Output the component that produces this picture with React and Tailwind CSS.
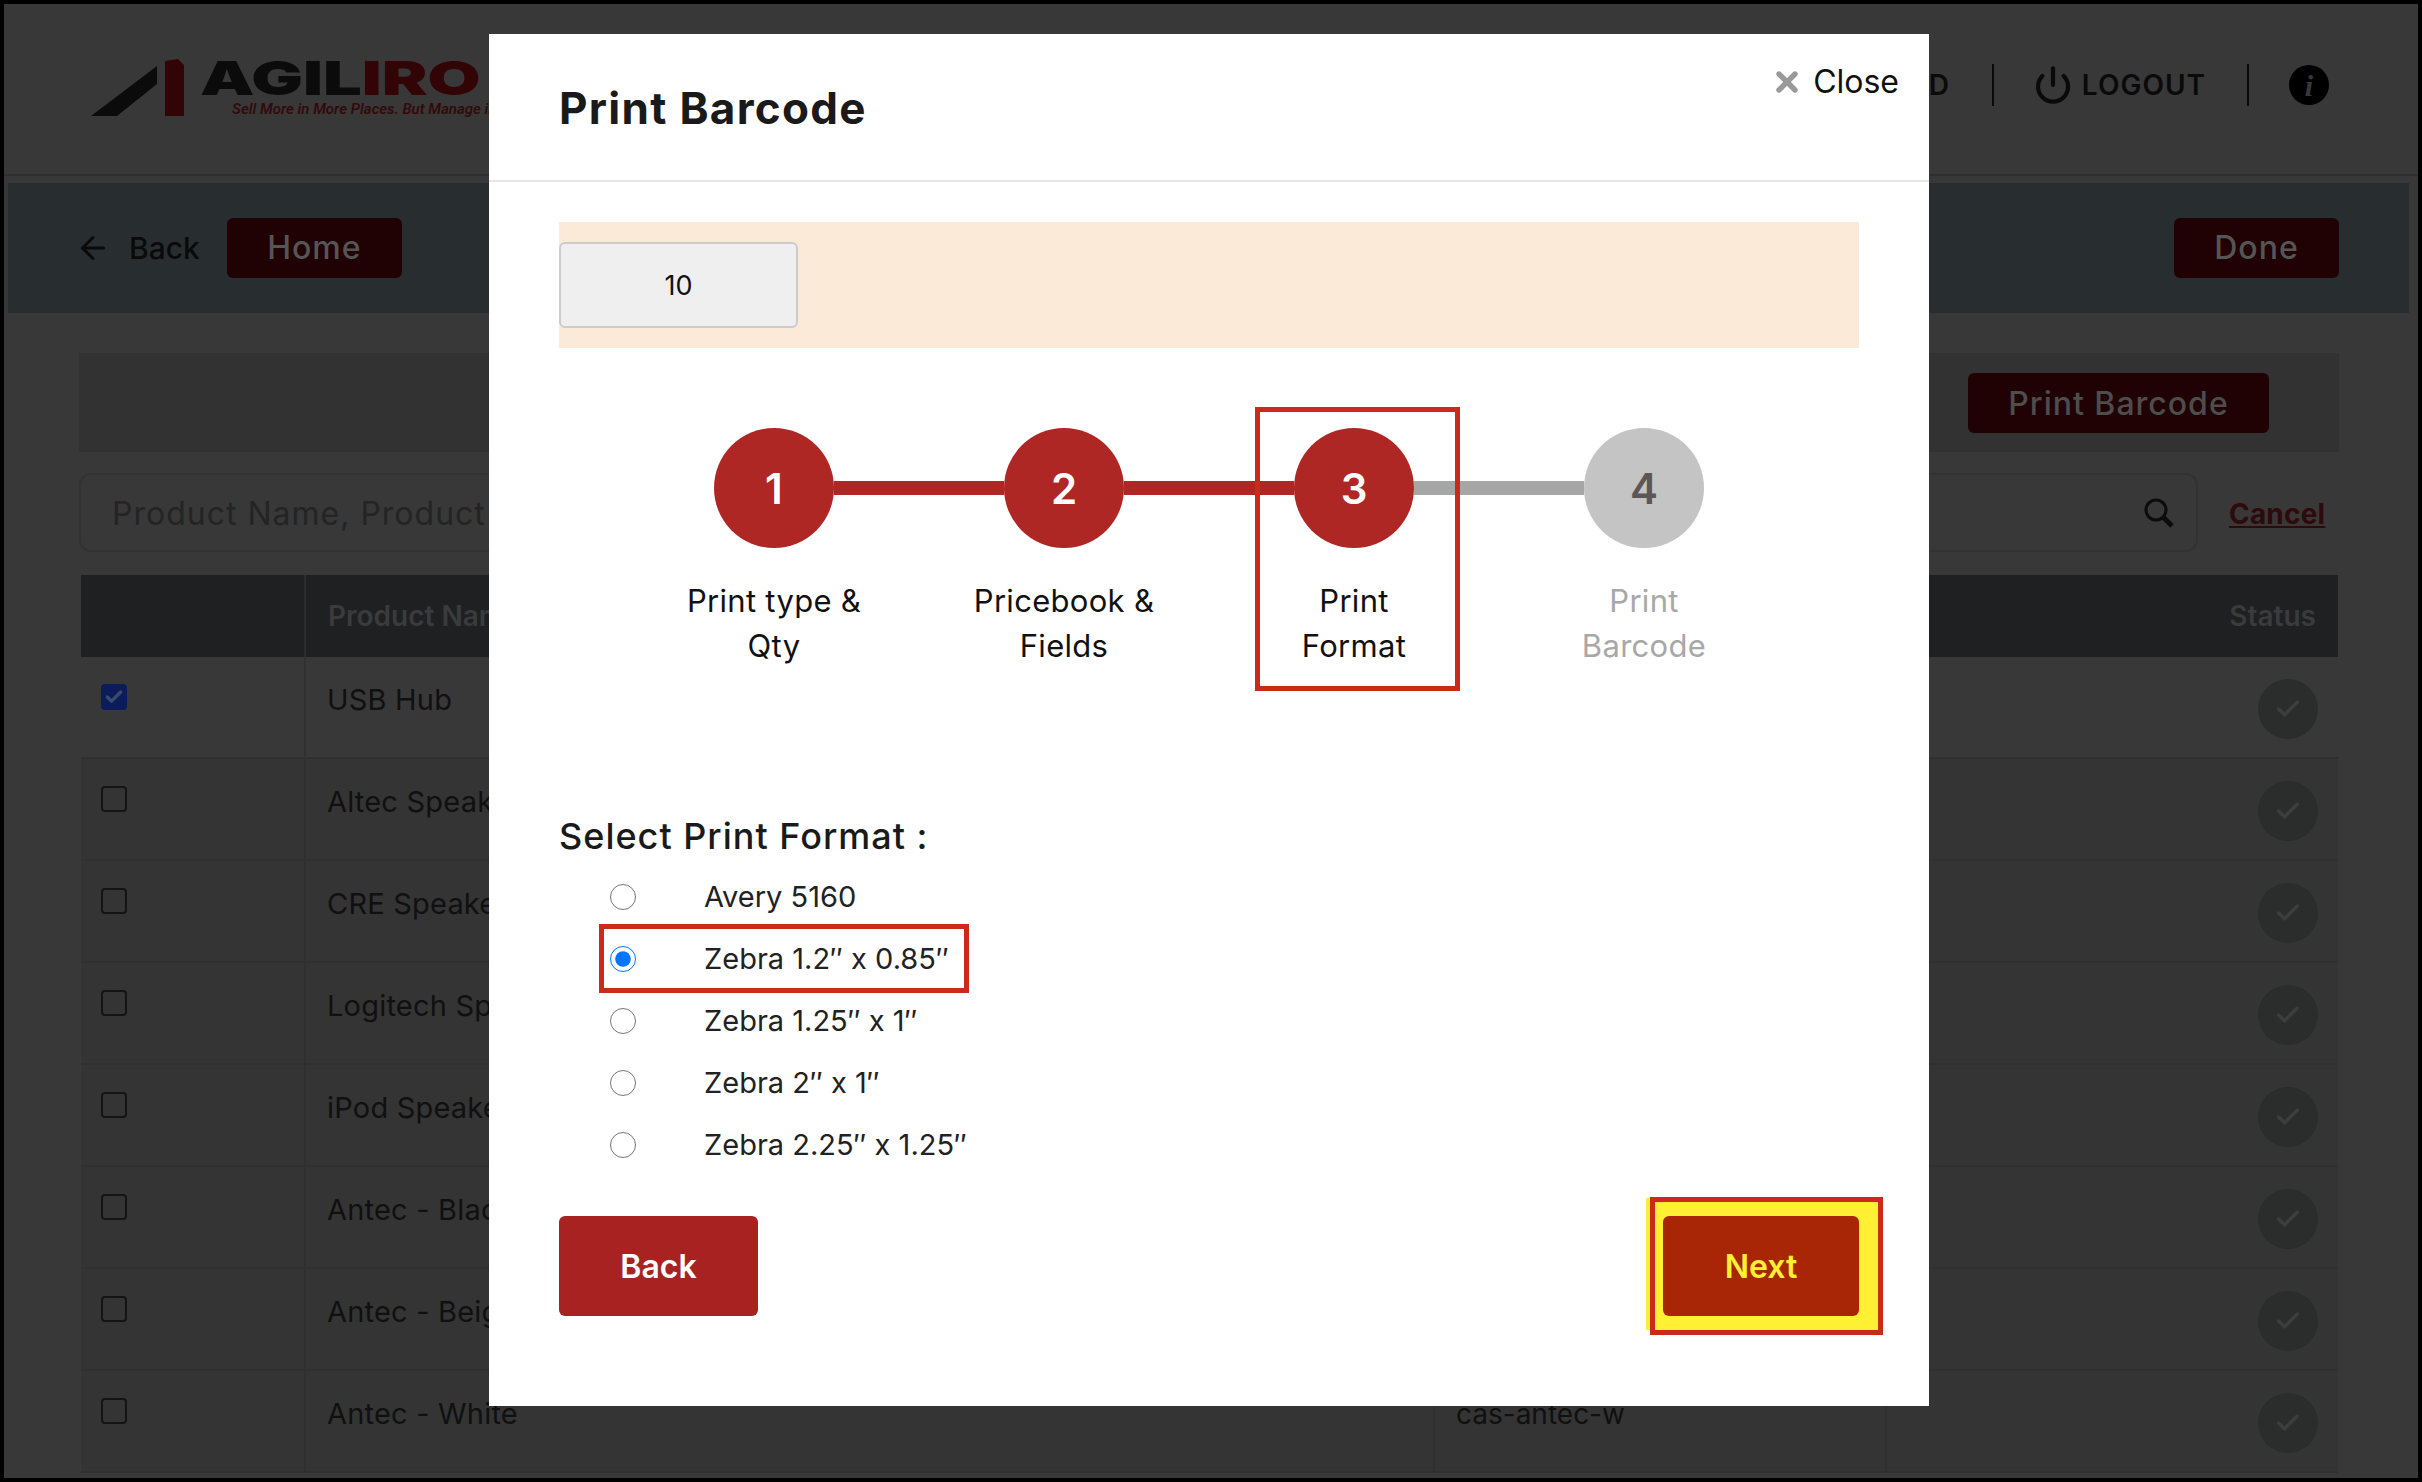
import React from "react";
import { ArrowLeft, Check, Power, X } from "lucide-react";

const rows = [
  { name: "USB Hub", code: "cas-usb-hub", checked: true },
  { name: "Altec Speakers", code: "cas-altec" },
  { name: "CRE Speakers", code: "cas-cre" },
  { name: "Logitech Speakers", code: "cas-logitech" },
  { name: "iPod Speakers", code: "cas-ipod" },
  { name: "Antec - Black", code: "cas-antec-b" },
  { name: "Antec - Beige", code: "cas-antec-g" },
  { name: "Antec - White", code: "cas-antec-w" },
];

const steps = [
  { lines: ["Print type &", "Qty"], active: true },
  { lines: ["Pricebook &", "Fields"], active: true },
  { lines: ["Print", "Format"], active: true },
  { lines: ["Print", "Barcode"], active: false },
];

const formats = ["Avery 5160", "Zebra 1.2″ x 0.85″", "Zebra 1.25″ x 1″", "Zebra 2″ x 1″", "Zebra 2.25″ x 1.25″"];

const Logo = () => (
  <div className="flex items-start">
    <svg width="96" height="60" viewBox="0 0 96 60" className="mt-[-2px]">
      <polygon points="0,58 66,8 66,26 26,58" fill="#0b0b0b" />
      <polygon points="74,3 87,1 93,7 93,58 74,58" fill="#330406" />
    </svg>
    <div className="ml-[13px] mt-[-6px] w-[300px]">
      <div className="origin-left scale-x-[1.46] whitespace-nowrap text-[47px] leading-[48px] font-black text-[#0b0b0b]">
        AGIL<span className="text-[#330406]">IRO</span>
      </div>
      <div className="ml-[32px] mt-[-1px] whitespace-nowrap font-[Roboto,sans-serif] text-[15px] leading-[16px] font-semibold italic text-[#330a0c]">
        Sell More in More Places. But Manage in One
      </div>
    </div>
  </div>
);

const App = () => {
  return (
    <div className="relative h-[1482px] w-[2422px] overflow-hidden bg-black p-[4px] font-[Inter,sans-serif]">
      {/* page behind the dialog */}
      <div className="h-full bg-[#383838]">
        <header className="flex h-[172px] items-start justify-between border-b-2 border-[#2f2f2f] pl-[87px] pr-[89px] pt-[56px]">
          <Logo />
          <div className="mt-[4px] flex items-center text-[#0a0a0a]">
            <span className="text-[28px] font-semibold tracking-[1px]">DASHBOARD</span>
            <div className="ml-[42px] h-[42px] w-[2px] bg-[#0a0a0a]" />
            <Power size={40} strokeWidth={2.5} className="ml-[39px]" />
            <span className="ml-[9px] text-[28px] font-semibold tracking-[1px]">LOGOUT</span>
            <div className="ml-[41px] h-[42px] w-[2px] bg-[#0a0a0a]" />
            <div className="ml-[40px] flex h-[40px] w-[40px] items-center justify-center rounded-full bg-black font-['Liberation_Serif',serif] text-[30px] font-bold italic text-[#383838]">
              i
            </div>
          </div>
        </header>

        <div className="mx-[4px] mt-[7px] flex h-[130px] w-[2401px] items-center justify-between bg-[#282e30] pl-[67px] pr-[70px]">
          <div className="flex items-center">
            <ArrowLeft size={36} strokeWidth={2} className="text-[#0a0a0a]" />
            <span className="ml-[18px] text-[30px] font-medium text-[#0a0a0a]">Back</span>
            <button className="ml-[27px] h-[60px] w-[175px] rounded-[6px] bg-[#200204] text-[32px] font-medium tracking-[1px] text-[#555555]">
              Home
            </button>
          </div>
          <button className="h-[60px] w-[165px] rounded-[6px] bg-[#200204] text-[32px] font-medium tracking-[1px] text-[#555555]">
            Done
          </button>
        </div>

        <main className="pl-[75px]">
          <div className="mt-[40px] flex h-[99px] w-[2260px] items-center justify-end bg-[#323232] pr-[70px]">
            <button className="h-[60px] w-[301px] rounded-[6px] bg-[#200204] pt-[2px] text-[32px] font-medium tracking-[1px] text-[#4d4d4d]">
              Print Barcode
            </button>
          </div>

          <div className="mt-[21px] flex items-center">
            <div className="flex h-[79px] w-[2119px] items-center justify-between rounded-[12px] border-2 border-[#323232] pl-[31px] pr-[21px]">
              <span className="pt-[3px] text-[32px] tracking-[1px] text-[#242424]">Product Name, Product Code</span>
              <svg width="32" height="32" viewBox="0 0 32 32" fill="none" stroke="#0c0c0c">
                <circle cx="13" cy="13" r="10" strokeWidth="3" />
                <line x1="20" y1="20" x2="29" y2="29" strokeWidth="5" />
              </svg>
            </div>
            <a href="#" className="ml-[31px] pt-[2px] text-[28px] font-bold tracking-[0.2px] text-[#2f0a0c] underline">
              Cancel
            </a>
          </div>

          <div className="ml-[2px] mt-[23px] w-[2257px]">
            <div className="grid h-[82px] grid-cols-[225px_1129px_452px_451px] items-center bg-[#1f2022] text-[28px] font-semibold text-[#3a3b3d]">
              <div className="h-full border-r-2 border-[#2d2d2f]" />
              <div className="pl-[22px]">Product Name</div>
              <div className="pl-[20px]">Product Code</div>
              <div className="pr-[22px] text-right">Status</div>
            </div>
            {rows.map((row, i) => (
              <div
                key={row.name}
                className={`grid h-[102px] grid-cols-[225px_1129px_452px_451px] border-b-2 border-[#303030] text-[29px] text-[#101010] ${
                  i === 0 ? "bg-[#383838]" : "bg-[#343434]"
                }`}
              >
                <div className="border-r-2 border-[#303030] pl-[20px] pt-[27px]">
                  {row.checked ? (
                    <div className="flex h-[26px] w-[26px] items-center justify-center rounded-[4px] bg-[#0a1c5c]">
                      <Check size={20} strokeWidth={4} className="text-[#3d4a6a]" />
                    </div>
                  ) : (
                    <div className="h-[26px] w-[26px] rounded-[4px] border-2 border-[#141414]" />
                  )}
                </div>
                <div className="border-r-2 border-[#303030] pl-[21px] pt-[25px] leading-[36px] tracking-[0.2px]">{row.name}</div>
                <div className="border-r-2 border-[#303030] pl-[21px] pt-[25px] text-[28px] leading-[36px]">{row.code}</div>
                <div className="flex justify-end pr-[20px] pt-[22px]">
                  <div className="flex h-[60px] w-[60px] items-center justify-center rounded-full bg-[#2b2d2c]">
                    <Check size={28} strokeWidth={3} className="text-[#3c3e3d]" />
                  </div>
                </div>
              </div>
            ))}
          </div>
        </main>
      </div>

      {/* dialog */}
      <div className="absolute left-[489px] top-[34px] h-[1372px] w-[1440px] bg-white">
        <div className="flex h-[148px] items-start justify-between border-b-2 border-[#e6e6e6] pl-[70px] pr-[30px]">
          <h2 className="mt-[49px] text-[44px] leading-[50px] font-bold tracking-[1.3px] text-[#1a1a1a]">Print Barcode</h2>
          <button className="mt-[28px] flex items-center text-[32px] leading-[40px] text-[#111111]">
            <X size={32} strokeWidth={4} className="text-[#999999]" />
            <span className="ml-[10px]">Close</span>
          </button>
        </div>

        <div className="pl-[70px] pr-[70px] pt-[40px]">
          <div className="h-[126px] bg-[#fbead8] pt-[20px]">
            <input
              readOnly
              value="10"
              className="h-[86px] w-[239px] rounded-[6px] border-2 border-[#cccccc] bg-[#efefef] text-center text-[27px] text-[#111111]"
            />
          </div>

          <div className="ml-[155px] mt-[80px] flex items-center">
            {steps.map((step, i) => (
              <React.Fragment key={step.lines.join(" ")}>
                <div
                  className={`flex h-[120px] w-[120px] shrink-0 items-center justify-center rounded-full text-[42px] font-semibold ${
                    step.active ? "bg-[#ae2724] text-white" : "bg-[#c4c4c4] text-[#5e5656]"
                  }`}
                >
                  {i + 1}
                </div>
                {i < 3 && (
                  <div className={`h-[14px] w-[170px] ${steps[i + 1].active ? "bg-[#ae2724]" : "bg-[#a6a6a6]"}`} />
                )}
              </React.Fragment>
            ))}
          </div>

          <div className="ml-[70px] mt-[30px] grid w-[1160px] grid-cols-4 text-center text-[31px] leading-[45px] tracking-[0.3px]">
            {steps.map((step) => (
              <div key={step.lines.join(" ")} className={step.active ? "text-[#111111]" : "text-[#a8a8a8]"}>
                {step.lines.map((line) => (
                  <div key={line} className="whitespace-nowrap">
                    {line}
                  </div>
                ))}
              </div>
            ))}
          </div>

          <h3 className="mt-[146px] text-[36px] leading-[45px] font-medium tracking-[1px] text-[#1a1a1a]">
            Select Print Format :
          </h3>

          <div className="mt-[7px] pl-[51px]">
            {formats.map((f, i) => (
              <label key={f} className="flex h-[62px] items-center text-[29px] text-[#222222]">
                <input type="radio" readOnly checked={i === 1} className="m-0 h-[26px] w-[26px]" />
                <span className="ml-[68px]">{f}</span>
              </label>
            ))}
          </div>

          <div className="mt-[40px] flex items-start justify-between">
            <button className="h-[100px] w-[199px] rounded-[6px] bg-[#a82222] pt-[2px] text-[32px] font-semibold text-white">
              Back
            </button>
            <button className="relative z-10 h-[100px] w-[196px] rounded-[6px] bg-[#a82505] pt-[2px] text-[32px] font-semibold text-[#fff033]">
              Next
            </button>
          </div>
        </div>
      </div>

      {/* highlight boxes drawn over the screenshot */}
      <div className="absolute left-[1255px] top-[407px] h-[284px] w-[205px] border-[5px] border-[#cb2a1a]" />
      <div className="absolute left-[599px] top-[924px] h-[69px] w-[370px] border-[5px] border-[#cb2a1a]" />
      <div className="absolute left-[1646px] top-[1198px] h-[132px] w-[10px] bg-[#fff033]" />
      <div className="absolute left-[1650px] top-[1197px] h-[138px] w-[233px] border-[5px] border-[#cb2a1a] bg-[#fff033]" />
    </div>
  );
};

export default App;
